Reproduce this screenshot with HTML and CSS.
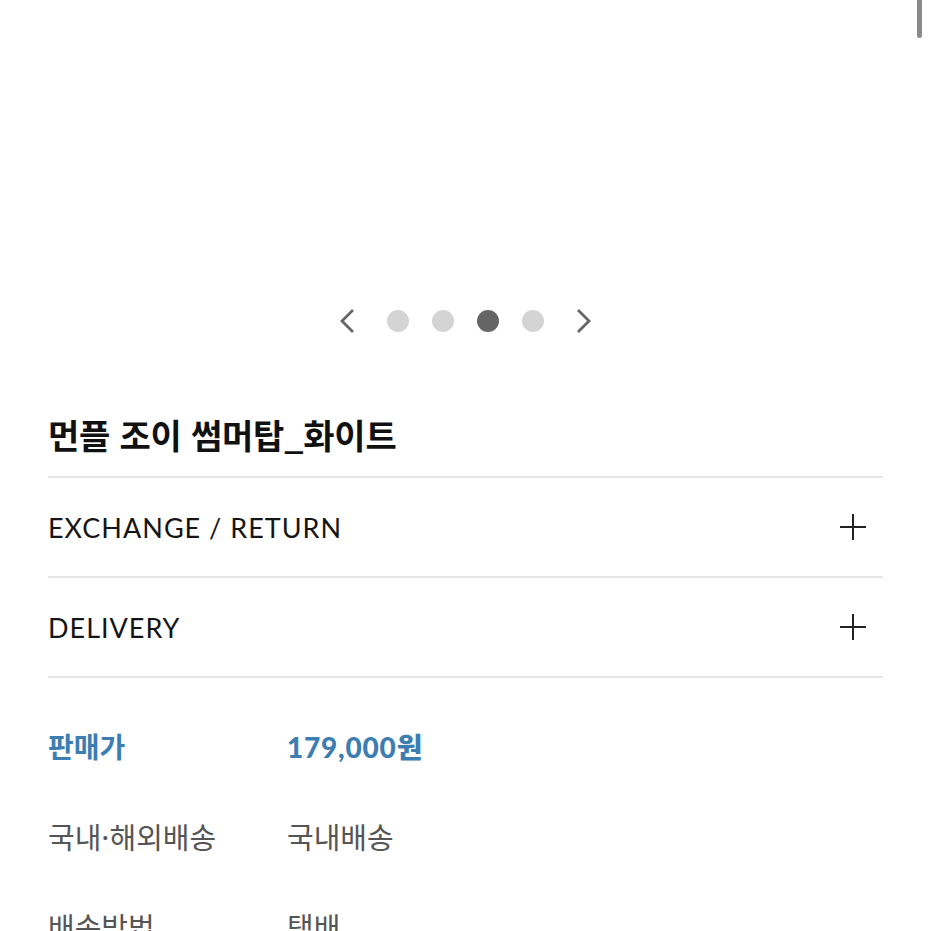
FILE: index.html
```html
<!DOCTYPE html>
<html lang="ko">
<head>
<meta charset="utf-8">
<link rel="stylesheet" href="styles.css">
</head>
<body>
<div class="scrollbar"></div>
<main class="page">
  <div class="gallery"></div>
  <div class="pager">
    <svg class="chev" width="20" height="28" viewBox="0 0 20 28"><path d="M15 3 L4 14 L15 25" fill="none" stroke="#666" stroke-width="2.8"/></svg>
    <span class="dot"></span>
    <span class="dot"></span>
    <span class="dot active"></span>
    <span class="dot"></span>
    <svg class="chev" width="20" height="28" viewBox="0 0 20 28"><path d="M5 3 L16 14 L5 25" fill="none" stroke="#666" stroke-width="2.8"/></svg>
  </div>
  <h1 class="title">먼플 조이 썸머탑_화이트</h1>
  <div class="acc">
    <div class="acc-row"><span class="acc-label">EXCHANGE / RETURN</span><span class="plus"></span></div>
    <div class="acc-row"><span class="acc-label">DELIVERY</span><span class="plus"></span></div>
  </div>
  <dl class="info">
    <div class="info-row price"><dt>판매가</dt><dd>179,000원</dd></div>
    <div class="info-row"><dt>국내·해외배송</dt><dd>국내배송</dd></div>
    <div class="info-row"><dt>배송방법</dt><dd>택배</dd></div>
  </dl>
</main>
</body>
</html>
```
FILE: styles.css
```css
html, body { margin: 0; padding: 0; background: #fff; overflow: hidden; }
body { font-family: "Noto Sans CJK KR", "Noto Sans", sans-serif; color: #111; }
.scrollbar { position: fixed; top: 0; right: 9px; width: 5px; height: 38px; background: #8a8a8a; border-radius: 0 0 3px 3px; }
.page { padding: 0 48px; }
.gallery { height: 307px; }
.pager { display: flex; align-items: center; justify-content: center; height: 28px; }
.chev { display: block; }
.pager .chev:first-child { margin-right: 17.5px; }
.pager .chev:last-child { margin-left: 17.5px; }
.dot { width: 22px; height: 22px; border-radius: 50%; background: #d4d4d4; margin: 0 11.5px; }
.dot.active { background: #656565; }
.title { margin: 0; padding-top: 77px; font-size: 34px; font-weight: 700; line-height: 46px; letter-spacing: -0.2px; padding-bottom: 18px; border-bottom: 2px solid #e6e6e6; }
.acc-row { display: flex; align-items: center; justify-content: space-between; height: 98px; border-bottom: 2px solid #e6e6e6; }
.acc-label { font-family: "Lato", "Noto Sans", sans-serif; font-size: 27px; letter-spacing: 1px; color: #151515; }
.plus { position: relative; width: 26px; height: 26px; margin-right: 17px; }
.plus::before, .plus::after { content: ""; position: absolute; background: #222; }
.plus::before { left: 0; right: 0; top: 12px; height: 2px; }
.plus::after { top: 0; bottom: 0; left: 12px; width: 2px; }
.info { margin: 0; padding-top: 23px; }
.info-row { display: flex; align-items: center; height: 90px; font-size: 29px; color: #555; }
.info-row dt { width: 239px; }
.info-row dd { margin: 0; }
.info-row.price { color: #3c7db2; font-weight: 700; font-size: 28px; }
.info-row.price dd { font-family: "Lato", "Noto Sans CJK KR", sans-serif; font-weight: 900; letter-spacing: 0.8px; }
```
